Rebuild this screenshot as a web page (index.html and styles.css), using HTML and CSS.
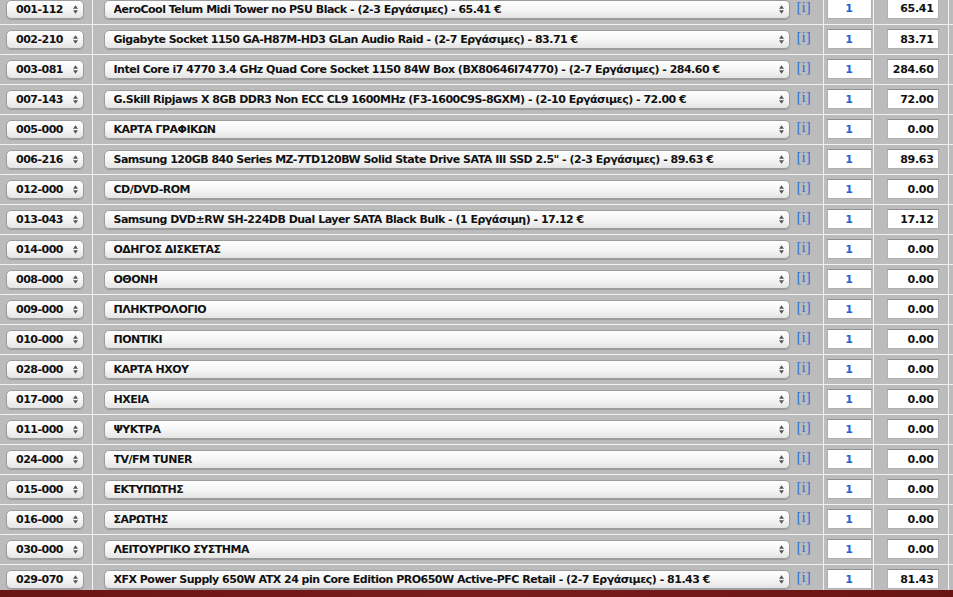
FILE: index.html
```html
<!DOCTYPE html>
<html lang="en">
<head>
    <meta charset="UTF-8">
    <meta name="viewport" content="width=device-width, initial-scale=1.0">
    <title>PC Builder</title>
    <link rel="stylesheet" href="styles.css">
</head>
<body>

    <div class="builder">
        <table class="parts">
            <colgroup>
                <col class="col-code">
                <col class="col-item">
                <col class="col-qty">
                <col class="col-price">
                <col class="col-rest">
            </colgroup>
            <tbody>
                <tr>
                    <td><span class="pick pick-code"><select><option>001-112</option></select><svg class="arrows" viewBox="0 0 6 10"><path d="M3 0L6 4H0Z M3 10L6 6H0Z"/></svg></span></td>
                    <td><span class="pick pick-item"><select><option>AeroCool Telum Midi Tower no PSU Black - (2-3 Εργάσιμες) - 65.41 €</option></select><svg class="arrows" viewBox="0 0 6 10"><path d="M3 0L6 4H0Z M3 10L6 6H0Z"/></svg></span><a class="info" href="#">[i]</a></td>
                    <td><input class="qty" type="text" value="1"></td>
                    <td><input class="price" type="text" value="65.41"></td>
                    <td></td>
                </tr>
                <tr>
                    <td><span class="pick pick-code"><select><option>002-210</option></select><svg class="arrows" viewBox="0 0 6 10"><path d="M3 0L6 4H0Z M3 10L6 6H0Z"/></svg></span></td>
                    <td><span class="pick pick-item"><select><option>Gigabyte Socket 1150 GA-H87M-HD3 GLan Audio Raid - (2-7 Εργάσιμες) - 83.71 €</option></select><svg class="arrows" viewBox="0 0 6 10"><path d="M3 0L6 4H0Z M3 10L6 6H0Z"/></svg></span><a class="info" href="#">[i]</a></td>
                    <td><input class="qty" type="text" value="1"></td>
                    <td><input class="price" type="text" value="83.71"></td>
                    <td></td>
                </tr>
                <tr>
                    <td><span class="pick pick-code"><select><option>003-081</option></select><svg class="arrows" viewBox="0 0 6 10"><path d="M3 0L6 4H0Z M3 10L6 6H0Z"/></svg></span></td>
                    <td><span class="pick pick-item"><select><option>Intel Core i7 4770 3.4 GHz Quad Core Socket 1150 84W Box (BX80646I74770) - (2-7 Εργάσιμες) - 284.60 €</option></select><svg class="arrows" viewBox="0 0 6 10"><path d="M3 0L6 4H0Z M3 10L6 6H0Z"/></svg></span><a class="info" href="#">[i]</a></td>
                    <td><input class="qty" type="text" value="1"></td>
                    <td><input class="price" type="text" value="284.60"></td>
                    <td></td>
                </tr>
                <tr>
                    <td><span class="pick pick-code"><select><option>007-143</option></select><svg class="arrows" viewBox="0 0 6 10"><path d="M3 0L6 4H0Z M3 10L6 6H0Z"/></svg></span></td>
                    <td><span class="pick pick-item"><select><option>G.Skill Ripjaws X 8GB DDR3 Non ECC CL9 1600MHz (F3-1600C9S-8GXM) - (2-10 Εργάσιμες) - 72.00 €</option></select><svg class="arrows" viewBox="0 0 6 10"><path d="M3 0L6 4H0Z M3 10L6 6H0Z"/></svg></span><a class="info" href="#">[i]</a></td>
                    <td><input class="qty" type="text" value="1"></td>
                    <td><input class="price" type="text" value="72.00"></td>
                    <td></td>
                </tr>
                <tr>
                    <td><span class="pick pick-code"><select><option>005-000</option></select><svg class="arrows" viewBox="0 0 6 10"><path d="M3 0L6 4H0Z M3 10L6 6H0Z"/></svg></span></td>
                    <td><span class="pick pick-item"><select><option>ΚΑΡΤΑ ΓΡΑΦΙΚΩΝ</option></select><svg class="arrows" viewBox="0 0 6 10"><path d="M3 0L6 4H0Z M3 10L6 6H0Z"/></svg></span><a class="info" href="#">[i]</a></td>
                    <td><input class="qty" type="text" value="1"></td>
                    <td><input class="price" type="text" value="0.00"></td>
                    <td></td>
                </tr>
                <tr>
                    <td><span class="pick pick-code"><select><option>006-216</option></select><svg class="arrows" viewBox="0 0 6 10"><path d="M3 0L6 4H0Z M3 10L6 6H0Z"/></svg></span></td>
                    <td><span class="pick pick-item"><select><option>Samsung 120GB 840 Series MZ-7TD120BW Solid State Drive SATA III SSD 2.5" - (2-3 Εργάσιμες) - 89.63 €</option></select><svg class="arrows" viewBox="0 0 6 10"><path d="M3 0L6 4H0Z M3 10L6 6H0Z"/></svg></span><a class="info" href="#">[i]</a></td>
                    <td><input class="qty" type="text" value="1"></td>
                    <td><input class="price" type="text" value="89.63"></td>
                    <td></td>
                </tr>
                <tr>
                    <td><span class="pick pick-code"><select><option>012-000</option></select><svg class="arrows" viewBox="0 0 6 10"><path d="M3 0L6 4H0Z M3 10L6 6H0Z"/></svg></span></td>
                    <td><span class="pick pick-item"><select><option>CD/DVD-ROM</option></select><svg class="arrows" viewBox="0 0 6 10"><path d="M3 0L6 4H0Z M3 10L6 6H0Z"/></svg></span><a class="info" href="#">[i]</a></td>
                    <td><input class="qty" type="text" value="1"></td>
                    <td><input class="price" type="text" value="0.00"></td>
                    <td></td>
                </tr>
                <tr>
                    <td><span class="pick pick-code"><select><option>013-043</option></select><svg class="arrows" viewBox="0 0 6 10"><path d="M3 0L6 4H0Z M3 10L6 6H0Z"/></svg></span></td>
                    <td><span class="pick pick-item"><select><option>Samsung DVD±RW SH-224DB Dual Layer SATA Black Bulk - (1 Εργάσιμη) - 17.12 €</option></select><svg class="arrows" viewBox="0 0 6 10"><path d="M3 0L6 4H0Z M3 10L6 6H0Z"/></svg></span><a class="info" href="#">[i]</a></td>
                    <td><input class="qty" type="text" value="1"></td>
                    <td><input class="price" type="text" value="17.12"></td>
                    <td></td>
                </tr>
                <tr>
                    <td><span class="pick pick-code"><select><option>014-000</option></select><svg class="arrows" viewBox="0 0 6 10"><path d="M3 0L6 4H0Z M3 10L6 6H0Z"/></svg></span></td>
                    <td><span class="pick pick-item"><select><option>ΟΔΗΓΟΣ ΔΙΣΚΕΤΑΣ</option></select><svg class="arrows" viewBox="0 0 6 10"><path d="M3 0L6 4H0Z M3 10L6 6H0Z"/></svg></span><a class="info" href="#">[i]</a></td>
                    <td><input class="qty" type="text" value="1"></td>
                    <td><input class="price" type="text" value="0.00"></td>
                    <td></td>
                </tr>
                <tr>
                    <td><span class="pick pick-code"><select><option>008-000</option></select><svg class="arrows" viewBox="0 0 6 10"><path d="M3 0L6 4H0Z M3 10L6 6H0Z"/></svg></span></td>
                    <td><span class="pick pick-item"><select><option>ΟΘΟΝΗ</option></select><svg class="arrows" viewBox="0 0 6 10"><path d="M3 0L6 4H0Z M3 10L6 6H0Z"/></svg></span><a class="info" href="#">[i]</a></td>
                    <td><input class="qty" type="text" value="1"></td>
                    <td><input class="price" type="text" value="0.00"></td>
                    <td></td>
                </tr>
                <tr>
                    <td><span class="pick pick-code"><select><option>009-000</option></select><svg class="arrows" viewBox="0 0 6 10"><path d="M3 0L6 4H0Z M3 10L6 6H0Z"/></svg></span></td>
                    <td><span class="pick pick-item"><select><option>ΠΛΗΚΤΡΟΛΟΓΙΟ</option></select><svg class="arrows" viewBox="0 0 6 10"><path d="M3 0L6 4H0Z M3 10L6 6H0Z"/></svg></span><a class="info" href="#">[i]</a></td>
                    <td><input class="qty" type="text" value="1"></td>
                    <td><input class="price" type="text" value="0.00"></td>
                    <td></td>
                </tr>
                <tr>
                    <td><span class="pick pick-code"><select><option>010-000</option></select><svg class="arrows" viewBox="0 0 6 10"><path d="M3 0L6 4H0Z M3 10L6 6H0Z"/></svg></span></td>
                    <td><span class="pick pick-item"><select><option>ΠΟΝΤΙΚΙ</option></select><svg class="arrows" viewBox="0 0 6 10"><path d="M3 0L6 4H0Z M3 10L6 6H0Z"/></svg></span><a class="info" href="#">[i]</a></td>
                    <td><input class="qty" type="text" value="1"></td>
                    <td><input class="price" type="text" value="0.00"></td>
                    <td></td>
                </tr>
                <tr>
                    <td><span class="pick pick-code"><select><option>028-000</option></select><svg class="arrows" viewBox="0 0 6 10"><path d="M3 0L6 4H0Z M3 10L6 6H0Z"/></svg></span></td>
                    <td><span class="pick pick-item"><select><option>ΚΑΡΤΑ ΗΧΟΥ</option></select><svg class="arrows" viewBox="0 0 6 10"><path d="M3 0L6 4H0Z M3 10L6 6H0Z"/></svg></span><a class="info" href="#">[i]</a></td>
                    <td><input class="qty" type="text" value="1"></td>
                    <td><input class="price" type="text" value="0.00"></td>
                    <td></td>
                </tr>
                <tr>
                    <td><span class="pick pick-code"><select><option>017-000</option></select><svg class="arrows" viewBox="0 0 6 10"><path d="M3 0L6 4H0Z M3 10L6 6H0Z"/></svg></span></td>
                    <td><span class="pick pick-item"><select><option>ΗΧΕΙΑ</option></select><svg class="arrows" viewBox="0 0 6 10"><path d="M3 0L6 4H0Z M3 10L6 6H0Z"/></svg></span><a class="info" href="#">[i]</a></td>
                    <td><input class="qty" type="text" value="1"></td>
                    <td><input class="price" type="text" value="0.00"></td>
                    <td></td>
                </tr>
                <tr>
                    <td><span class="pick pick-code"><select><option>011-000</option></select><svg class="arrows" viewBox="0 0 6 10"><path d="M3 0L6 4H0Z M3 10L6 6H0Z"/></svg></span></td>
                    <td><span class="pick pick-item"><select><option>ΨΥΚΤΡΑ</option></select><svg class="arrows" viewBox="0 0 6 10"><path d="M3 0L6 4H0Z M3 10L6 6H0Z"/></svg></span><a class="info" href="#">[i]</a></td>
                    <td><input class="qty" type="text" value="1"></td>
                    <td><input class="price" type="text" value="0.00"></td>
                    <td></td>
                </tr>
                <tr>
                    <td><span class="pick pick-code"><select><option>024-000</option></select><svg class="arrows" viewBox="0 0 6 10"><path d="M3 0L6 4H0Z M3 10L6 6H0Z"/></svg></span></td>
                    <td><span class="pick pick-item"><select><option>TV/FM TUNER</option></select><svg class="arrows" viewBox="0 0 6 10"><path d="M3 0L6 4H0Z M3 10L6 6H0Z"/></svg></span><a class="info" href="#">[i]</a></td>
                    <td><input class="qty" type="text" value="1"></td>
                    <td><input class="price" type="text" value="0.00"></td>
                    <td></td>
                </tr>
                <tr>
                    <td><span class="pick pick-code"><select><option>015-000</option></select><svg class="arrows" viewBox="0 0 6 10"><path d="M3 0L6 4H0Z M3 10L6 6H0Z"/></svg></span></td>
                    <td><span class="pick pick-item"><select><option>ΕΚΤΥΠΩΤΗΣ</option></select><svg class="arrows" viewBox="0 0 6 10"><path d="M3 0L6 4H0Z M3 10L6 6H0Z"/></svg></span><a class="info" href="#">[i]</a></td>
                    <td><input class="qty" type="text" value="1"></td>
                    <td><input class="price" type="text" value="0.00"></td>
                    <td></td>
                </tr>
                <tr>
                    <td><span class="pick pick-code"><select><option>016-000</option></select><svg class="arrows" viewBox="0 0 6 10"><path d="M3 0L6 4H0Z M3 10L6 6H0Z"/></svg></span></td>
                    <td><span class="pick pick-item"><select><option>ΣΑΡΩΤΗΣ</option></select><svg class="arrows" viewBox="0 0 6 10"><path d="M3 0L6 4H0Z M3 10L6 6H0Z"/></svg></span><a class="info" href="#">[i]</a></td>
                    <td><input class="qty" type="text" value="1"></td>
                    <td><input class="price" type="text" value="0.00"></td>
                    <td></td>
                </tr>
                <tr>
                    <td><span class="pick pick-code"><select><option>030-000</option></select><svg class="arrows" viewBox="0 0 6 10"><path d="M3 0L6 4H0Z M3 10L6 6H0Z"/></svg></span></td>
                    <td><span class="pick pick-item"><select><option>ΛΕΙΤΟΥΡΓΙΚΟ ΣΥΣΤΗΜΑ</option></select><svg class="arrows" viewBox="0 0 6 10"><path d="M3 0L6 4H0Z M3 10L6 6H0Z"/></svg></span><a class="info" href="#">[i]</a></td>
                    <td><input class="qty" type="text" value="1"></td>
                    <td><input class="price" type="text" value="0.00"></td>
                    <td></td>
                </tr>
                <tr>
                    <td><span class="pick pick-code"><select><option>029-070</option></select><svg class="arrows" viewBox="0 0 6 10"><path d="M3 0L6 4H0Z M3 10L6 6H0Z"/></svg></span></td>
                    <td><span class="pick pick-item"><select><option>XFX Power Supply 650W ATX 24 pin Core Edition PRO650W Active-PFC Retail - (2-7 Εργάσιμες) - 81.43 €</option></select><svg class="arrows" viewBox="0 0 6 10"><path d="M3 0L6 4H0Z M3 10L6 6H0Z"/></svg></span><a class="info" href="#">[i]</a></td>
                    <td><input class="qty" type="text" value="1"></td>
                    <td><input class="price" type="text" value="81.43"></td>
                    <td></td>
                </tr>
            </tbody>
        </table>
    </div>

</body>
</html>
```

FILE: styles.css
```css
* {
    margin: 0;
    padding: 0;
    box-sizing: border-box;
}

body, html {
    height: 100%;
    background: linear-gradient(90deg, #6a1414, #7a1c1c 50%, #6a1414);
    font-family: 'DejaVu Sans', sans-serif;
    overflow: hidden;
}

.builder {
    height: 590px;
    overflow: hidden;
    background: #bcbcbc;
}

.parts {
    margin-top: -6px;
    width: 953px;
    border-collapse: collapse;
    table-layout: fixed;
}

.col-code { width: 92px; }
.col-item { width: 731px; }
.col-qty { width: 50px; }
.col-price { width: 75px; }
.col-rest { width: 5px; }

.parts td {
    height: 30px;
    background: #bcbcbc;
    border-right: 1px solid #f2f2f2;
    border-bottom: 1px solid #f2f2f2;
    vertical-align: middle;
    white-space: nowrap;
}

.parts td:last-child {
    border-right: none;
}

.pick {
    position: relative;
    display: inline-block;
    vertical-align: middle;
}

.pick select {
    appearance: none;
    -webkit-appearance: none;
    display: block;
    width: 100%;
    height: 19px;
    padding: 0 0 0 9px;
    border: 1px solid #9c9c9c;
    border-radius: 5px;
    background: linear-gradient(#ffffff, #f6f6f6 50%, #e4e4e4);
    box-shadow: 0 1px 1px rgba(0, 0, 0, 0.18);
    color: #111;
    font-family: 'DejaVu Sans', sans-serif;
    font-size: 11px;
    font-weight: bold;
    letter-spacing: -0.5px;
    line-height: 17px;
    outline: none;
}

.arrows {
    position: absolute;
    top: 5px;
    right: 6px;
    width: 5px;
    height: 9px;
    fill: #555;
    pointer-events: none;
}

.pick-code {
    width: 78px;
    margin-left: 6px;
}

.pick-item {
    width: 686px;
    margin-left: 11px;
}

.info {
    display: inline-block;
    vertical-align: top;
    margin: 1px 0 0 7px;
    color: #2f6fd8;
    font-family: 'Liberation Serif', serif;
    font-size: 15px;
    line-height: 15px;
    text-decoration: none;
}

.qty,
.price {
    display: block;
    height: 20px;
    border: 1px solid #b0b0b0;
    border-top-color: #909090;
    background: #fff;
    font-family: 'DejaVu Sans', sans-serif;
    font-size: 11px;
    font-weight: bold;
    outline: none;
}

.qty {
    width: 45px;
    margin-left: 3px;
    color: #1f62d0;
    text-align: center;
}

.price {
    width: 52px;
    margin-left: 13px;
    padding-right: 4px;
    color: #111;
    letter-spacing: -0.3px;
    text-align: right;
}
```
